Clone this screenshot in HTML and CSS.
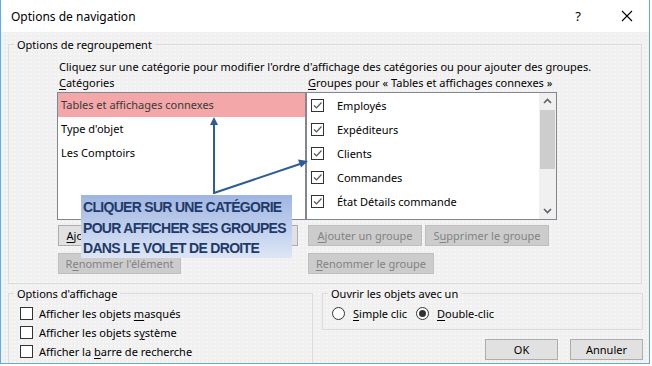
FILE: index.html
```html
<!DOCTYPE html>
<html>

<head>
    <title>Options de navigation</title>
    <link rel="stylesheet" href="styles.css">
</head>

<body>
    <div class="window">
        <div class="titlebar">
            <span class="title">Options de navigation</span>
            <span class="help">?</span>
            <svg class="close" width="12" height="12" viewBox="0 0 12 12">
                <path d="M1 1 L11 11 M11 1 L1 11" stroke="#000" stroke-width="1.1" fill="none" />
            </svg>
        </div>

        <div class="content">
            <fieldset class="group grouping">
                <legend>Options de regroupement</legend>
                <div class="grouping-body">
                    <p class="hint">Cliquez sur une catégorie pour modifier l'ordre d'affichage des catégories ou pour ajouter des groupes.</p>
                    <div class="panes">
                        <div class="pane cat-pane">
                            <div class="pane-label"><u>C</u>atégories</div>
                            <ul class="list categories">
                                <li class="selected">Tables et affichages connexes</li>
                                <li>Type d'objet</li>
                                <li>Les Comptoirs</li>
                            </ul>
                            <div class="btn-row">
                                <button class="btn cat-add"><u>A</u>jouter un élément</button>
                                <button class="btn cat-del">Supprimer l'élément</button>
                            </div>
                            <div class="btn-row">
                                <button class="btn cat-ren" disabled>R<u>e</u>nommer l'élément</button>
                            </div>
                        </div>

                        <div class="pane group-pane">
                            <div class="pane-label"><u>G</u>roupes pour « Tables et affichages connexes »</div>
                            <div class="list groups">
                                <ul class="group-items">
                                    <li><span class="check"></span><span>Employés</span></li>
                                    <li><span class="check"></span><span>Expéditeurs</span></li>
                                    <li><span class="check"></span><span>Clients</span></li>
                                    <li><span class="check"></span><span>Commandes</span></li>
                                    <li><span class="check"></span><span>État Détails commande</span></li>
                                </ul>
                                <div class="scrollbar">
                                    <svg class="arrow" width="17" height="17" viewBox="0 0 17 17">
                                        <path d="M5 10 L8.5 6.5 L12 10" stroke="#606060" stroke-width="1.6" fill="none" />
                                    </svg>
                                    <div class="track">
                                        <div class="thumb"></div>
                                    </div>
                                    <svg class="arrow" width="17" height="17" viewBox="0 0 17 17">
                                        <path d="M5 7 L8.5 10.5 L12 7" stroke="#606060" stroke-width="1.6" fill="none" />
                                    </svg>
                                </div>
                            </div>
                            <div class="btn-row">
                                <button class="btn grp-add" disabled><u>A</u>jouter un groupe</button>
                                <button class="btn grp-del" disabled>S<u>u</u>pprimer le groupe</button>
                            </div>
                            <div class="btn-row">
                                <button class="btn grp-ren" disabled><u>R</u>enommer le groupe</button>
                            </div>
                        </div>
                    </div>
                </div>
            </fieldset>

            <div class="bottom">
                <fieldset class="group display">
                    <legend>Options d'affichage</legend>
                    <div class="display-body">
                        <label class="option"><span class="box"></span><span>Afficher les objets <u>m</u>asqués</span></label>
                        <label class="option"><span class="box"></span><span>Afficher les objets s<u>y</u>stème</span></label>
                        <label class="option"><span class="box"></span><span>Afficher la <u>b</u>arre de recherche</span></label>
                    </div>
                </fieldset>

                <div class="right-col">
                    <fieldset class="group open-with">
                        <legend>Ouvrir les objets avec un</legend>
                        <div class="radios">
                            <label class="radio simple"><span class="dot"></span><span><u>S</u>imple clic</span></label>
                            <label class="radio"><span class="dot on"></span><span><u>D</u>ouble-clic</span></label>
                        </div>
                    </fieldset>
                    <div class="actions">
                        <button class="btn action">OK</button>
                        <button class="btn action">Annuler</button>
                    </div>
                </div>
            </div>
        </div>

        <!-- annotation drawn on top of the dialog -->
        <svg class="arrows" width="652" height="366" viewBox="0 0 652 366">
            <path d="M213 194 L213 123" stroke="#2f5b98" stroke-width="2" fill="none" />
            <path d="M213 117 L209 125 L217 125 Z" fill="#2f5b98" />
            <path d="M213 193 L299 164" stroke="#2f5b98" stroke-width="2" fill="none" />
            <path d="M307 161 L297 159.5 L300 167.5 Z" fill="#2f5b98" />
        </svg>
        <div class="callout">
            CLIQUER SUR UNE CATÉGORIE<br>
            POUR AFFICHER SES GROUPES<br>
            DANS LE VOLET DE DROITE
        </div>
    </div>
</body>

</html>
```

FILE: styles.css
```css
body {
    margin: 0;
    background-color: #fff;
    font-family: "Noto Sans", sans-serif;
    font-size: 11px;
    color: #000;
}

.window {
    position: relative;
    width: 650px;
    height: 364px;
    box-sizing: border-box;
    border: 1px solid #63abe3;
    border-top: none;
    overflow: hidden;
    background-color: #f0f0f0;
    background-image: radial-gradient(circle, rgba(255, 255, 255, 0.9) 0.6px, transparent 0.8px);
    background-size: 4px 4px;
}

.titlebar {
    height: 32px;
    background-color: #fff;
    display: flex;
    align-items: center;
    padding-left: 10px;
    font-size: 12px;
}

.title {
    flex: 1;
}

.help {
    font-size: 13px;
    margin-right: 40px;
}

.close {
    margin-right: 16px;
}

.content {
    padding: 4px 0 0 7px;
}

.group {
    margin: 0;
    padding: 0;
    border: 1px solid #dcdcdc;
    box-sizing: border-box;
}

.group legend {
    margin-left: 5px;
    padding: 0 3px;
    line-height: 17px;
}

u {
    text-decoration-thickness: 1px;
    text-underline-offset: 2px;
}

.grouping {
    width: 634px;
    height: 248px;
}

.grouping-body {
    padding-left: 48px;
}

.hint {
    margin: 6px 0 0 2px;
    line-height: 16px;
}

.panes {
    display: flex;
}

.pane-label {
    line-height: 16px;
    margin: 0 0 1px 2px;
    white-space: nowrap;
}

.list {
    margin: 0;
    padding: 0;
    list-style: none;
    height: 128px;
    box-sizing: border-box;
    border: 1px solid #828790;
    background-color: #fff;
}

.categories {
    width: 249px;
}

.categories li {
    height: 24px;
    line-height: 24px;
    padding-left: 3px;
}

.categories .selected {
    background-color: #f4a7a9;
    color: #3a3a3a;
}

.groups {
    width: 251px;
    display: flex;
}

.group-items {
    flex: 1;
    margin: 0;
    padding: 0;
    list-style: none;
}

.group-items li {
    height: 24px;
    display: flex;
    align-items: center;
    padding-left: 4px;
}

.check {
    width: 13px;
    height: 13px;
    box-sizing: border-box;
    border: 1px solid #333;
    margin-right: 13px;
    background: #fff url("data:image/svg+xml,%3Csvg xmlns='http://www.w3.org/2000/svg' width='11' height='11'%3E%3Cpath d='M2 5.5 L4.5 8 L9.5 2.5' stroke='%23555' stroke-width='1.2' fill='none'/%3E%3C/svg%3E") no-repeat center;
}

.scrollbar {
    width: 17px;
    display: flex;
    flex-direction: column;
    background-color: #f0f0f0;
}

.track {
    flex: 1;
}

.thumb {
    height: 59px;
    margin: 0 1px;
    background-color: #cdcdcd;
}

.btn-row {
    display: flex;
    gap: 3px;
    margin: 5px 0 0 1px;
}

.btn-row + .btn-row {
    margin-top: 7px;
}

.group-pane .btn-row {
    margin-left: 2px;
}

.btn {
    height: 21px;
    padding: 0;
    font-family: inherit;
    font-size: 11px;
    color: #000;
    background-color: #e1e1e1;
    border: 1px solid #adadad;
}

.btn:disabled {
    background-color: #cccccc;
    border-color: #bfbfbf;
    color: #838383;
}

.cat-add {
    width: 117px;
}

.cat-del {
    width: 120px;
}

.cat-ren {
    width: 123px;
}

.grp-add {
    width: 114px;
}

.grp-del {
    width: 124px;
}

.grp-ren {
    width: 126px;
}

.bottom {
    display: flex;
    gap: 9px;
    margin-top: 1px;
}

.display {
    width: 305px;
    height: 90px;
}

.display-body {
    padding: 2px 0 0 11px;
}

.option {
    display: flex;
    align-items: center;
    height: 19px;
}

.box {
    width: 13px;
    height: 13px;
    box-sizing: border-box;
    border: 1px solid #333;
    background-color: #fff;
    margin-right: 6px;
}

.right-col {
    width: 321px;
}

.open-with {
    width: 321px;
    height: 45px;
}

.radios {
    display: flex;
    height: 23px;
    align-items: center;
    padding-left: 9px;
}

.radio {
    display: flex;
    align-items: center;
}

.radio.simple {
    width: 84px;
}

.dot {
    width: 13px;
    height: 13px;
    box-sizing: border-box;
    border: 1px solid #333;
    border-radius: 50%;
    background-color: #fff;
    margin-right: 8px;
    display: flex;
    align-items: center;
    justify-content: center;
}

.dot.on::after {
    content: "";
    width: 7px;
    height: 7px;
    border-radius: 50%;
    background-color: #333;
}

.actions {
    display: flex;
    justify-content: flex-end;
    gap: 12px;
    margin-top: 9px;
}

.action {
    width: 73px;
}

.arrows {
    position: absolute;
    left: 0;
    top: 0;
    pointer-events: none;
}

.callout {
    position: absolute;
    left: 80px;
    top: 195px;
    width: 211px;
    height: 63px;
    padding: 2px 0 0 2px;
    box-sizing: border-box;
    background: linear-gradient(#9fb5e2, #dde6f6);
    font-family: "Liberation Sans", Arial, sans-serif;
    font-weight: bold;
    font-size: 14px;
    letter-spacing: -0.7px;
    line-height: 20.5px;
    color: #1f3a68;
    white-space: nowrap;
}
```
